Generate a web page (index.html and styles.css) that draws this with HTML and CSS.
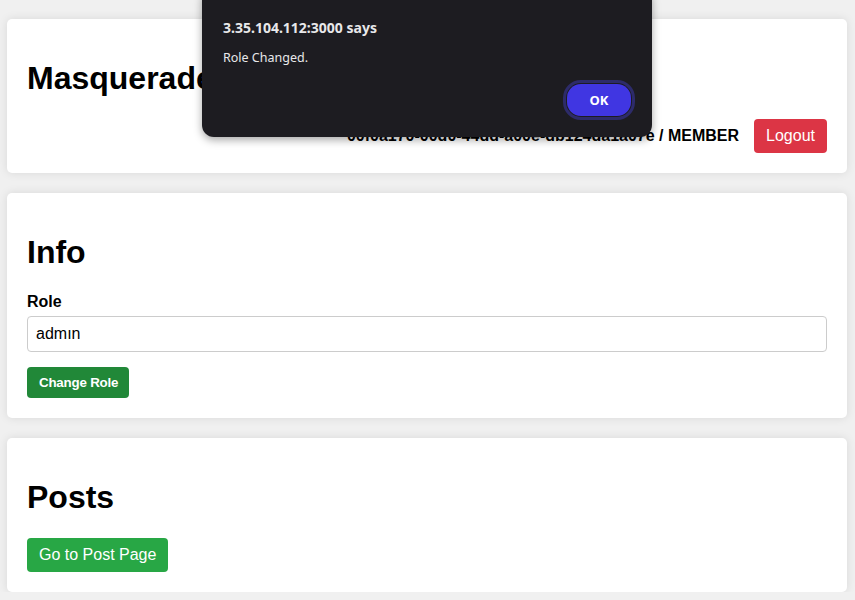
FILE: index.html
```html
<!DOCTYPE html>
<html lang="en">
<head>
<meta charset="utf-8">
<title>Masquerade</title>
<link rel="stylesheet" href="styles.css">
</head>
<body>
<div class="container">
  <section class="card">
    <h1 class="title">Masquerade</h1>
    <div class="user-row">
      <span class="user-id">00f0a170-00d0-44dd-a00e-db124da1a07e / MEMBER</span>
      <button class="btn btn-logout">Logout</button>
    </div>
  </section>
  <section class="card">
    <h1 class="title">Info</h1>
    <label class="field-label" for="role">Role</label>
    <input class="field-input" id="role" type="text" value="admın">
    <button class="btn btn-change">Change Role</button>
  </section>
  <section class="card">
    <h1 class="title">Posts</h1>
    <button class="btn btn-posts">Go to Post Page</button>
  </section>
</div>

<div class="alert">
  <div class="alert-title">3.35.104.112:3000 says</div>
  <div class="alert-msg">Role Changed.</div>
  <div class="alert-actions">
    <button class="alert-ok">OK</button>
  </div>
</div>
</body>
</html>
```

FILE: styles.css
```css
* { box-sizing: border-box; }

html, body {
  margin: 0;
  padding: 0;
}

body {
  background: #f0f0f0;
  font-family: "Liberation Sans", Arial, sans-serif;
  color: #000;
  padding-top: 19px;
  overflow: hidden;
}

.container {
  width: 840px;
  margin: 0 8px 0 7px;
  display: flex;
  flex-direction: column;
  gap: 20px;
}

.card {
  background: #fff;
  border-radius: 5px;
  box-shadow: 0 0 10px rgba(0, 0, 0, 0.1);
  padding: 20px;
  display: flex;
  flex-direction: column;
  align-items: flex-start;
}

.title {
  font-size: 32px;
  font-weight: bold;
  margin: 21px 0 22px;
  line-height: normal;
}

.user-row {
  align-self: stretch;
  display: flex;
  justify-content: flex-end;
  align-items: center;
  gap: 15px;
}

.user-id {
  font-weight: bold;
  font-size: 16px;
}

.btn {
  font-family: "Liberation Sans", Arial, sans-serif;
  border: none;
  border-radius: 4px;
  color: #fff;
  font-size: 16px;
  padding: 8px 12px;
  line-height: 18px;
  cursor: pointer;
}

.btn-logout { background: #dc3545; }

.btn-posts { background: #28a745; }

.btn-change {
  background: #218838;
  font-size: 13.333px;
  font-weight: bold;
  line-height: 15px;
  padding: 8px 11px 8px 12px;
  letter-spacing: -0.2px;
}

.field-label {
  font-weight: bold;
  font-size: 16px;
  margin-bottom: 5px;
}

.field-input {
  align-self: stretch;
  font-family: "Liberation Sans", Arial, sans-serif;
  font-size: 16px;
  padding: 8px;
  height: 36px;
  border: 1px solid #ccc;
  border-radius: 4px;
  margin: 0 0 15px;
  color: #000;
}

.alert {
  position: absolute;
  left: 202px;
  top: -12px;
  width: 450px;
  height: 149px;
  background: #1d1c21;
  border-radius: 12px;
  box-shadow: 0 3px 8px rgba(0, 0, 0, 0.35);
  padding: 30px 18px 18px 21px;
  display: flex;
  flex-direction: column;
  font-family: "Noto Sans", "Open Sans", sans-serif;
  color: #e8e8ea;
}

.alert-title {
  font-size: 14px;
  font-weight: bold;
  line-height: 20px;
}

.alert-msg {
  font-size: 12.5px;
  line-height: 18px;
  margin-top: 11px;
}

.alert-actions {
  margin-top: auto;
  display: flex;
  justify-content: flex-end;
}

.alert-ok {
  width: 64px;
  height: 32px;
  margin: 3px;
  border: none;
  border-radius: 14px;
  background: #4036e2;
  color: #fff;
  font-family: "Noto Sans", "Open Sans", sans-serif;
  font-weight: bold;
  font-size: 13px;
  outline: 3px solid #2d2b6a;
  outline-offset: 1px;
}
```
